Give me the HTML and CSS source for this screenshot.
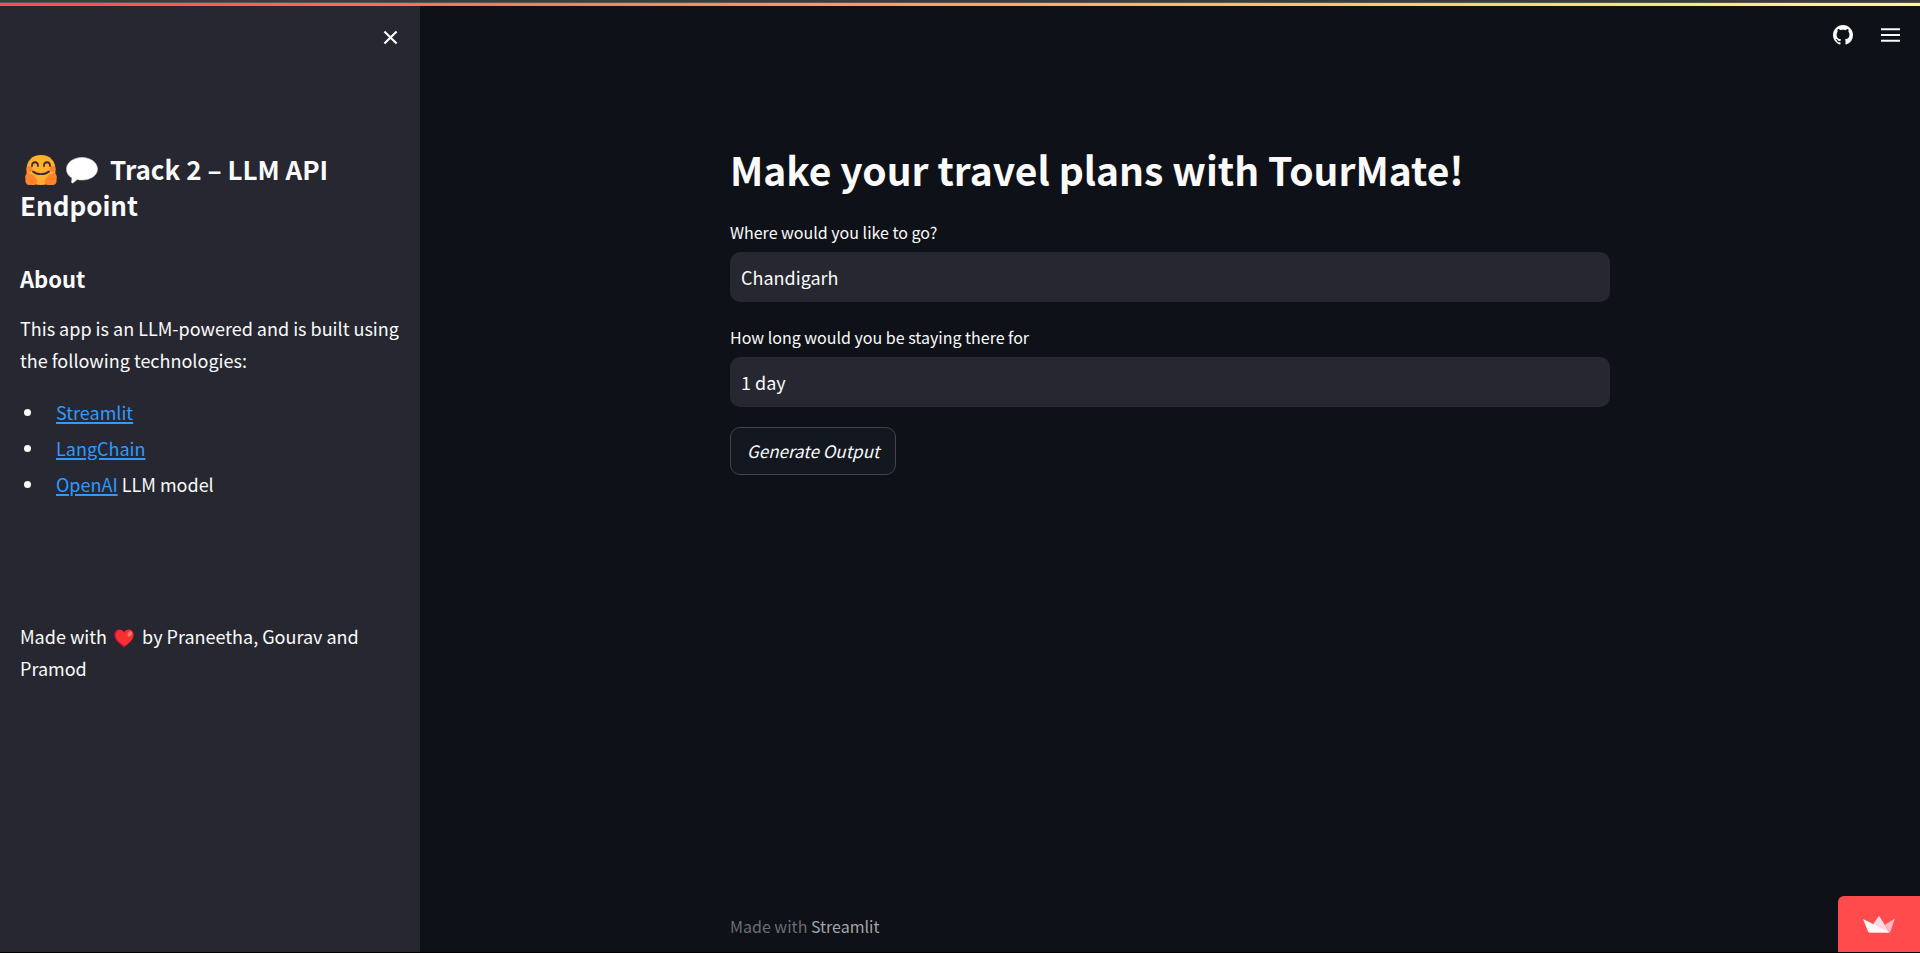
FILE: index.html
```html
<!DOCTYPE html>
<html lang="en">
<head>
<meta charset="utf-8">
<meta name="viewport" content="width=device-width, initial-scale=1">
<title>TourMate</title>
<link rel="stylesheet" href="styles.css">
</head>
<body>
<div class="window-edge"></div>
<div class="decoration"></div>
<div class="app">
  <aside class="sidebar">
    <div class="sidebar-top">
      <button class="icon-button" type="button" aria-label="Close sidebar">
        <svg class="close-icon" viewBox="0 0 16 16"><path d="M1.5 1.5 14.5 14.5M14.5 1.5 1.5 14.5" fill="none" stroke="#fafafa" stroke-width="2.300"/></svg>
      </button>
    </div>
    <div class="sidebar-content">
      <h2 class="track-title"><svg class="emoji" viewBox="0 0 32 32" role="img" aria-label="Hugging face">
          <path d="M16 1C7 1 1.5 7 1.5 16c0 8 4 15 14.500 15s14.500-7 14.500-15C30.500 7 25 1 16 1z" fill="#ffb02e"/>
          <circle cx="4.500" cy="15" r="3" fill="#ff822d"/><circle cx="27.500" cy="15" r="3" fill="#ff822d"/>
          <path d="M7 12c0-5 6-5 6 0M19 12c0-5 6-5 6 0M8 17.500c4 3.500 12 3.500 16 0" fill="none" stroke="#402a32" stroke-width="1.800" stroke-linecap="round"/>
          <path d="M2 19c1.500-1.500 2.500 0 3 2 1-1.500 2.500-1 2.500.5 1.500-.5 2.500.5 2 2 1.500 0 2.500 1 2 2.500 1.500 1.500.5 5-2.500 5H4.500C1 31 0 28 .5 25c-1-2 0-4 1.500-6z" fill="#ff822d"/>
          <path d="M30 19c-1.500-1.500-2.500 0-3 2-1-1.500-2.500-1-2.500.5-1.500-.5-2.500.5-2 2-1.500 0-2.500 1-2 2.500-1.500 1.500-.5 5 2.500 5h4.500c3.500 0 4.500-3 4-6 1-2 0-4-1.500-6z" fill="#ff822d"/>
        </svg><svg class="emoji" viewBox="0 0 32 32" role="img" aria-label="Speech bubble">
          <path d="M16 3.500C7.500 3.500.5 8.500.5 15c0 4 2 7 5.500 9l-.5 4c0 1 1 1.300 1.800.7l4-3.200c1.500.4 3 .5 4.700.5 8.500 0 15.500-4.500 15.500-11S24.500 3.500 16 3.500z" fill="#fff" stroke="#d9d5dd" stroke-width=".6"/>
        </svg>Track 2 – LLM API Endpoint</h2>
      <h3 class="about-title">About</h3>
      <p class="text">This app is an LLM-powered and is built using the following technologies:</p>
      <ul class="tech-list">
        <li><a href="#streamlit">Streamlit</a></li>
        <li><a href="#langchain">LangChain</a></li>
        <li><a href="#openai">OpenAI</a> LLM model</li>
      </ul>
      <p class="text credits">Made with <svg class="heart" viewBox="0 0 20 19" role="img" aria-label="love">
          <path d="M10 18.500C5 14.500.3 11 .3 6 .3 2.500 2.500.5 5.300.5 7.500.5 9 1.500 10 3.300 11 1.500 12.500.5 14.700.5c2.800 0 5 2 5 5.500 0 5-4.700 8.500-9.700 12.500z" fill="#c90f46"/>
          <path d="M10.500 17C6 13.500 1.800 10.500 1.800 6.200 1.800 3 3.500 1 6 1c2 0 3.400 1 4.200 3C11 2 12.700.8 14.800.8c2.700 0 4.500 2 4.500 5.200 0 4.500-4.300 7.500-8.800 11z" fill="#f8312f"/>
          <ellipse cx="15.800" cy="5" rx="2" ry="2.800" transform="rotate(30 15.800 5)" fill="#f37366"/>
        </svg> by Praneetha, Gourav and Pramod</p>
    </div>
  </aside>
  <main class="main">
    <header class="toolbar">
      <a class="icon-button" href="#source" aria-label="View source on GitHub">
        <svg class="github-icon" viewBox="0 0 16 16"><path fill="#fafafa" d="M8 0C3.580 0 0 3.580 0 8c0 3.540 2.290 6.530 5.470 7.590.4.070.55-.17.55-.38 0-.19-.01-.82-.01-1.490-2.010.37-2.530-.49-2.690-.94-.09-.23-.48-.94-.82-1.130-.28-.15-.68-.52-.01-.53.63-.01 1.080.58 1.230.82.72 1.210 1.870.87 2.330.66.070-.52.28-.87.51-1.070-1.780-.2-3.640-.89-3.640-3.950 0-.87.31-1.590.82-2.150-.08-.2-.36-1.020.08-2.120 0 0 .67-.21 2.200.82.640-.18 1.320-.27 2-.27s1.360.09 2 .27c1.530-1.040 2.200-.82 2.200-.82.44 1.100.16 1.920.08 2.120.51.560.82 1.270.82 2.150 0 3.070-1.870 3.750-3.650 3.950.29.25.54.73.54 1.480 0 1.070-.01 1.930-.01 2.200 0 .21.150.46.550.38A8.010 8.010 0 0 0 16 8c0-4.420-3.580-8-8-8z"/></svg>
      </a>
      <button class="icon-button" type="button" aria-label="Main menu">
        <svg class="menu-icon" viewBox="0 0 20 14"><path d="M0 1h20M0 7h20M0 13h20" stroke="#fafafa" stroke-width="2"/></svg>
      </button>
    </header>
    <div class="content">
      <h1 class="title">Make your travel plans with TourMate!</h1>
      <form class="form">
        <div class="field">
          <label for="place">Where would you like to go?</label>
          <input id="place" type="text" value="Chandigarh">
        </div>
        <div class="field">
          <label for="stay">How long would you be staying there for</label>
          <input id="stay" type="text" value="1 day">
        </div>
        <button class="generate" type="button">Generate Output</button>
      </form>
      <footer class="footer">Made with <a href="#streamlit-home">Streamlit</a></footer>
    </div>
  </main>
</div>
<a class="badge" href="#cloud" aria-label="Hosted with Streamlit">
  <svg class="crown" viewBox="0 0 32 17">
    <path d="M16 0 21.500 8.500 10.500 8z" fill="#ffd0d6"/>
    <path d="M16 0 26.500 16.500H6L10.500 8z" fill="#ffd9e0"/>
    <path d="M32 2.500 27 16.500 21.500 9z" fill="#ffb8bf"/>
    <path d="M0 3 27 16.500H6.500Q5.500 16.500 5 15.500z" fill="#fff8f9"/>
  </svg>
</a>
<div class="bottom-edge"></div>
</body>
</html>
```
FILE: styles.css
```css
* { box-sizing: border-box; }
body {
  margin: 0;
  min-height: 100vh;
  display: flex;
  flex-direction: column;
  background: #0e1117;
  color: #fafafa;
  font-family: "Noto Sans CJK SC", "Noto Sans", sans-serif;
  font-size: 18px;
  line-height: 32px;
}
h1, h2, h3, p, ul { margin: 0; padding: 0; }
button, input { font: inherit; color: inherit; }
svg { display: block; }
.window-edge { height: 3px; background: #3b3b3b; border-bottom: 1px solid #555; }
.decoration { height: 3px; background: linear-gradient(90deg, #ff4b4b, #fffd80); }
.bottom-edge { height: 1px; background: #000; }
.app { flex: 1; display: flex; }

.sidebar { width: 420px; flex: none; background: #262730; }
.sidebar-top { display: flex; justify-content: flex-end; padding: 24px 22px 0; }
.icon-button { display: flex; padding: 0; border: 0; background: none; cursor: pointer; }
.close-icon { width: 15px; height: 15px; }
.sidebar-content { padding: 106px 20px 0; }
.track-title { font-size: 26px; line-height: 36px; font-weight: 700; }
.emoji { display: inline-block; width: 32px; height: 32px; margin: 0 4px 0 5px; vertical-align: -6px; }
.track-title .emoji:last-of-type { margin-right: 12px; }
.about-title { margin-top: 40px; font-size: 22px; line-height: 30px; font-weight: 700; }
.text { margin-top: 19px; }
.tech-list { margin-top: 20px; padding-left: 36px; }
.tech-list li { position: relative; margin-bottom: 4px; list-style: none; }
.tech-list li::before {
  content: "";
  position: absolute;
  left: -32px;
  top: 13px;
  width: 7px;
  height: 7px;
  border-radius: 50%;
  background: #fafafa;
}
.tech-list a {
  color: #2e9aff;
  text-decoration: underline;
  text-decoration-thickness: 2px;
  text-underline-offset: 2px;
}
.credits { margin-top: 120px; }
.heart { display: inline-block; width: 20px; height: 19px; margin: 0 4px 0 3px; vertical-align: -4px; }

.main { flex: 1; display: flex; flex-direction: column; }
.toolbar { display: flex; justify-content: flex-end; align-items: center; gap: 28px; height: 57px; padding: 0 20px 0 0; }
.github-icon { width: 20px; height: 20px; }
.menu-icon { width: 19px; height: 14px; }
.content {
  flex: 1;
  display: flex;
  flex-direction: column;
  width: 100%;
  max-width: 920px;
  margin: 0 auto;
  padding: 78px 20px 10px;
}
.title { font-size: 39px; line-height: 56px; font-weight: 700; }
.form { display: flex; flex-direction: column; align-items: flex-start; gap: 20px; padding-top: 20px; }
.field { display: flex; flex-direction: column; width: 100%; gap: 5px; }
.field label { font-size: 16px; line-height: 30px; }
.field input {
  height: 50px;
  padding: 0 11px;
  border: 0;
  border-radius: 10px;
  background: #262730;
}
.generate {
  height: 48px;
  padding: 0 16px;
  border: 1px solid #41444c;
  border-radius: 10px;
  background: #131720;
  font-size: 17px;
  font-style: italic;
}
.footer { margin-top: auto; font-size: 16px; color: #6b6d72; }
.footer a { color: #a3a5a8; text-decoration: none; }
.badge {
  position: fixed;
  right: 0;
  bottom: 1px;
  display: flex;
  align-items: center;
  justify-content: center;
  width: 82px;
  height: 56px;
  border-radius: 6px 0 0 0;
  background: #ff4b4b;
}
.crown { width: 32px; height: 17px; }
```
